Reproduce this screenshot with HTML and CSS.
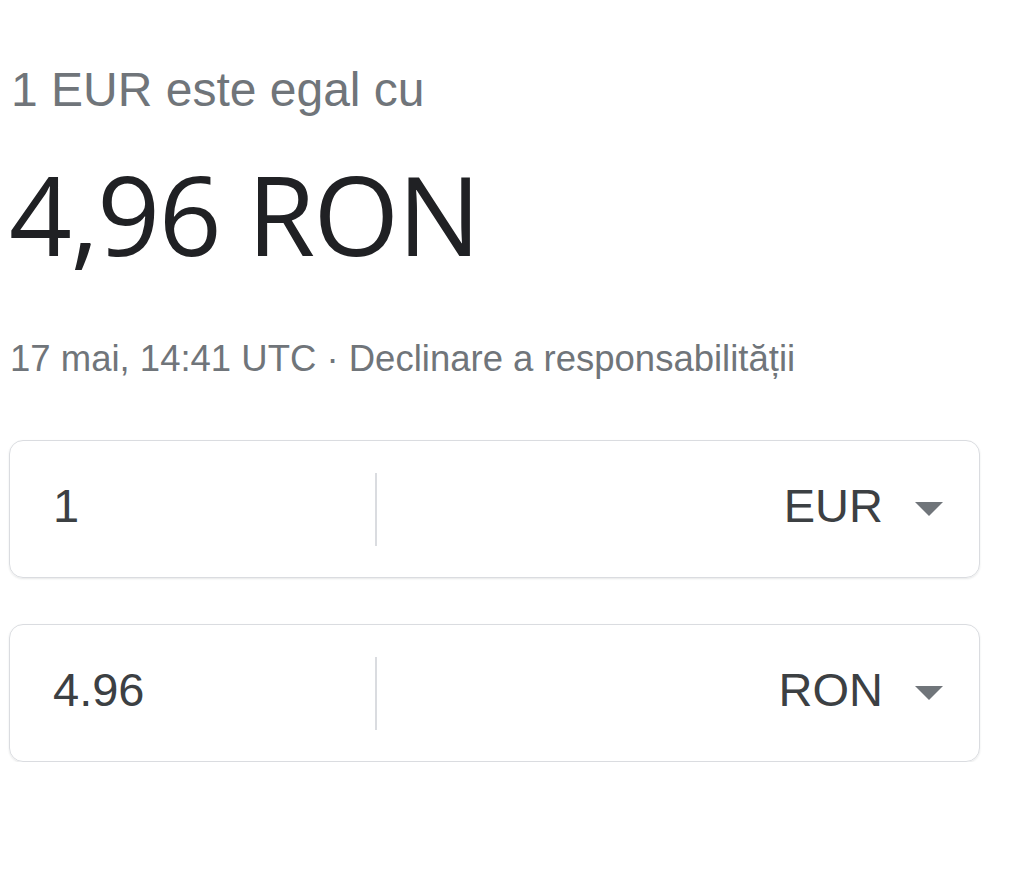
FILE: index.html
```html
<!DOCTYPE html>
<html lang="ro">
<head>
<meta charset="utf-8">
<link rel="stylesheet" href="styles.css">
</head>
<body>
<div class="card">
  <div class="subtitle">1 EUR este egal cu</div>
  <div class="result">4,96 RON</div>
  <div class="meta">17 mai, 14:41 UTC · <span class="link">Declinare a responsabilității</span></div>
  <div class="converter">
    <div class="row">
      <div class="amount"><span class="val">1</span></div>
      <div class="divider"></div>
      <div class="currency"><span class="val">EUR</span><svg class="arrow" viewBox="0 0 28 14" width="28" height="14"><path d="M0 0 L28 0 L14 14 Z" fill="#70757a"/></svg></div>
    </div>
    <div class="row">
      <div class="amount"><span class="val">4.96</span></div>
      <div class="divider"></div>
      <div class="currency"><span class="val">RON</span><svg class="arrow" viewBox="0 0 28 14" width="28" height="14"><path d="M0 0 L28 0 L14 14 Z" fill="#70757a"/></svg></div>
    </div>
  </div>
</div>
</body>
</html>
```

FILE: styles.css
```css
html, body {
  margin: 0;
  padding: 0;
  background: #fff;
}
.card {
  padding: 62px 44px 0 9px;
  font-family: "Liberation Sans", Arial, sans-serif;
}
.subtitle {
  font-size: 48px;
  line-height: 56px;
  color: #70757a;
  padding-left: 2px;
}
.result {
  font-family: "Open Sans", sans-serif;
  font-size: 110px;
  line-height: 130px;
  color: #202124;
  margin-top: 30px;
  letter-spacing: -1.5px;
}
.meta {
  font-size: 36.5px;
  line-height: 44px;
  color: #70757a;
  margin-top: 59px;
  padding-left: 1px;
}
.converter {
  display: flex;
  flex-direction: column;
  gap: 46px;
  margin-top: 59px;
}
.row {
  display: flex;
  align-items: center;
  height: 136px;
  border: 1px solid #dadce0;
  border-radius: 14px;
  box-shadow: 0 1px 2px rgba(60,64,67,0.12);
}
.val {
  display: block;
  padding-bottom: 7px;
}
.amount {
  width: 322px;
  padding-left: 43px;
  font-size: 47px;
  color: #3c4043;
}
.divider {
  width: 2px;
  height: 73px;
  background: #dadce0;
}
.currency {
  flex: 1;
  display: flex;
  justify-content: flex-end;
  align-items: center;
  gap: 32px;
  padding-right: 36px;
  font-size: 47px;
  color: #3c4043;
}
.arrow {
  display: block;
}
```
